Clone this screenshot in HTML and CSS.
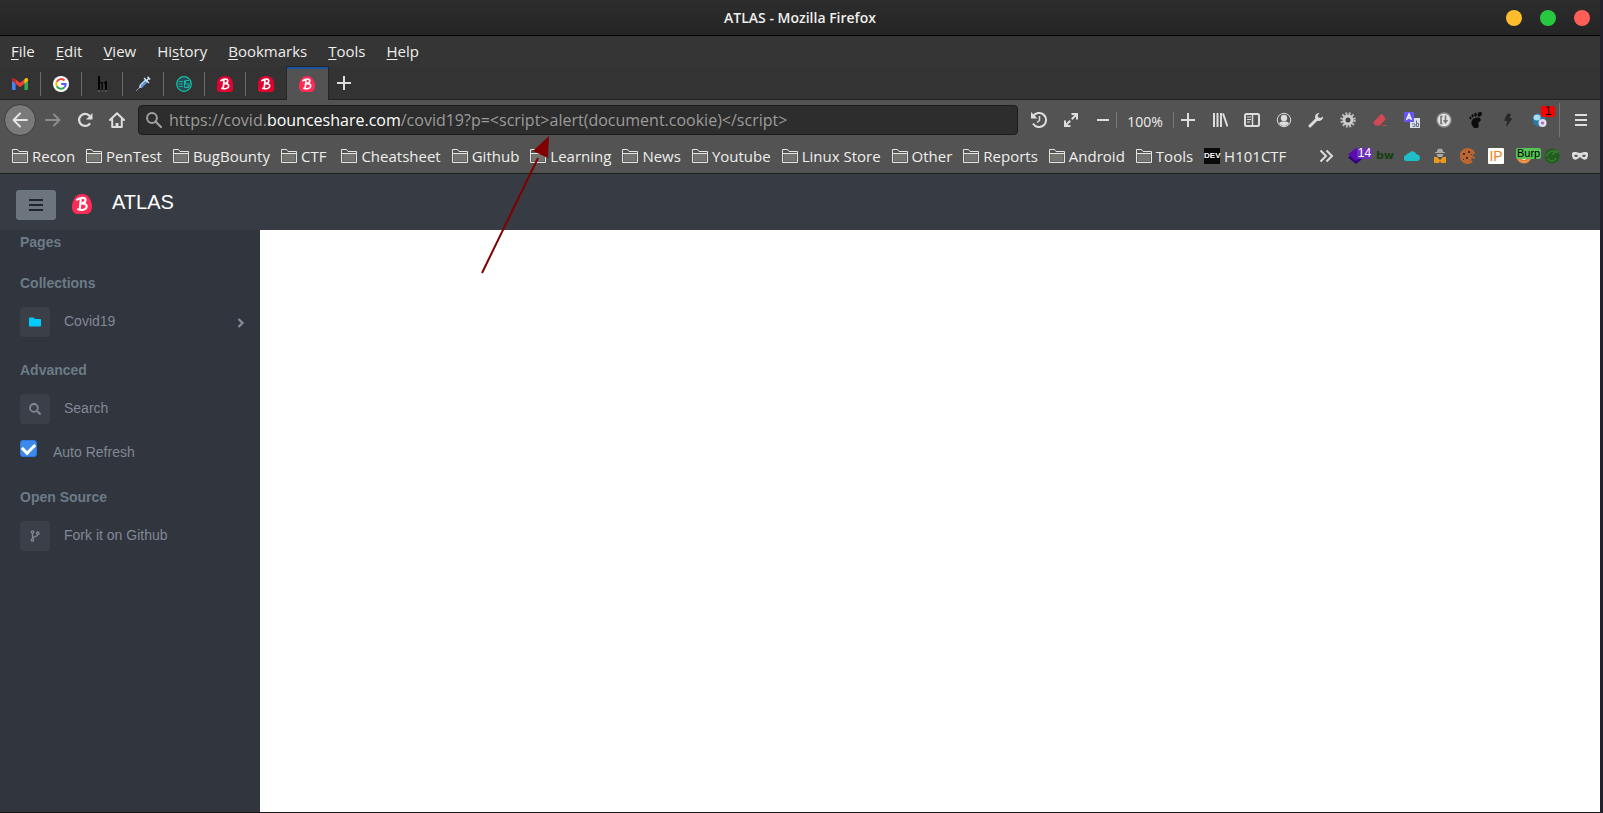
FILE: index.html
```html
<!DOCTYPE html>
<html lang="en">
<head>
<meta charset="utf-8">
<title>ATLAS</title>
<link rel="stylesheet" href="styles.css">
</head>
<body>
<svg class="defs" aria-hidden="true">
  <symbol id="folder" viewBox="0 0 16 16"><path d="M.5 14.500V1.500h5l1.500 2h8.500v11z" fill="none" stroke="#e4e4e2"/><path d="M1.500 6h13v7.500h-13z" fill="#73736f"/><path d="M.5 5.500h15" stroke="#e4e4e2"/></symbol>
  <symbol id="logo" viewBox="0 0 16 16"><path d="M8 0C3 0 0 5 0 10.500 0 14 2 16 5 16h6c3 0 5-2 5-5.500C16 5 13 0 8 0z" fill="currentColor"/><path d="M4 4.600C6 3 10.500 2.200 10.800 4.500 11 6.500 8.500 7.400 6.800 7.600 9.500 7.300 12 8 11.700 10.300 11.400 12.600 7.500 13.300 4.800 12.300M7 4.200 6.200 12.300" fill="none" stroke="#fff" stroke-width="1.700" stroke-linecap="round" stroke-linejoin="round"/></symbol>
  <symbol id="logo-square" viewBox="0 0 16 16"><path d="M8 0C3 0 0 3.500 0 8v5.500C0 15 1 16 2.500 16h11c1.500 0 2.500-1 2.500-2.500V8c0-4.500-3-8-8-8z" fill="currentColor"/><path d="M4 4.600C6 3 10.500 2.200 10.800 4.500 11 6.500 8.500 7.400 6.800 7.600 9.500 7.300 12 8 11.700 10.300 11.400 12.600 7.500 13.300 4.800 12.300M7 4.200 6.200 12.300" fill="none" stroke="#fff" stroke-width="1.700" stroke-linecap="round" stroke-linejoin="round"/></symbol>
</svg>
<div class="window">
  <header class="titlebar">
    <h1 class="window-title">ATLAS - Mozilla Firefox</h1>
    <div class="window-buttons">
      <button class="dot dot-yellow" aria-label="Minimize"></button>
      <button class="dot dot-green" aria-label="Maximize"></button>
      <button class="dot dot-red" aria-label="Close"></button>
    </div>
  </header>
  <nav class="menubar" aria-label="Menu">
    <button><u>F</u>ile</button><button><u>E</u>dit</button><button><u>V</u>iew</button><button>Hi<u>s</u>tory</button><button><u>B</u>ookmarks</button><button><u>T</u>ools</button><button><u>H</u>elp</button>
  </nav>
  <div class="tabs" role="tablist">
    <button class="tab" role="tab" aria-label="Gmail"><svg viewBox="0 0 16 16"><path d="M0 3.500h3.600V14H1.200A1.200 1.200 0 0 1 0 12.800z" fill="#4285f4"/><path d="M12.400 3.500H16v9.300a1.200 1.200 0 0 1-1.200 1.200h-2.400z" fill="#34a853"/><path d="M3.600 3.300 8 6.700l4.400-3.400v4.500L8 11.200 3.600 7.800z" fill="#ea4335"/><path d="M0 4.800V3.700c0-2 2-2.200 3.600-.4v4.500z" fill="#c5221f"/><path d="M16 4.800V3.700c0-2-2-2.200-3.600-.4v4.500z" fill="#fbbc04"/></svg></button>
    <button class="tab" role="tab" aria-label="Google"><svg viewBox="0 0 16 16"><circle cx="8" cy="8" r="8" fill="#fff"/><g fill="none" stroke-width="2"><path d="M11.500 4.500A4.800 4.800 0 0 0 3.800 5.700" stroke="#ea4335"/><path d="M3.800 5.700a4.800 4.800 0 0 0 0 4.600" stroke="#fbbc05"/><path d="M3.800 10.300a4.800 4.800 0 0 0 7.500 1.200" stroke="#34a853"/><path d="M11.300 11.500A4.800 4.800 0 0 0 12.700 8H8.200" stroke="#5b5cf6"/></g></svg></button>
    <button class="tab" role="tab" aria-label="HackerOne"><svg viewBox="0 0 16 16"><path d="M4 0h2v14H4zM10 6.500l2-1.500h1v9h-2V7.500h-1zM6 6h3v1H6zM7.500 7h1.200v7H7.500z" fill="#000"/><path d="M4 15h2M8 15h1M11 15h2" stroke="#777"/></svg></button>
    <button class="tab" role="tab" aria-label="Syringe"><svg viewBox="0 0 16 16"><path d="m1 15 4-4" stroke="#7892bb"/><path d="m4.500 9 6-6 2.500 2.500-6 6-3 .800z" fill="#b9d5f5"/><path d="m5.500 10 5-5 1.500 1.500-5 5z" fill="#5c8cd6"/><path d="m9 2 5 5M12 4.200l2-2.200M12.500.800l2.700 2.700" stroke="#dce9fa" stroke-width="1.300"/></svg></button>
    <button class="tab" role="tab" aria-label="Dashboard"><svg viewBox="0 0 16 16"><circle cx="8" cy="8" r="7.300" fill="#25485a" stroke="#18c6a0" stroke-width="1.200"/><path d="M3 5.500h4M2.500 8H7M3 10.500h4M8.500 4.500v7H13V9M13 4.500H9.500V8H14M11 10h2" fill="none" stroke="#18b99a"/></svg></button>
    <button class="tab" role="tab" aria-label="Bounceshare"><svg class="crimson"><use href="#logo-square"/></svg></button>
    <button class="tab tab-last" role="tab" aria-label="Bounceshare"><svg class="crimson"><use href="#logo-square"/></svg></button>
    <button class="tab tab-active" role="tab" aria-selected="true" aria-label="ATLAS"><svg class="pink"><use href="#logo"/></svg></button>
    <button class="new-tab" aria-label="New tab"><svg viewBox="0 0 16 16"><path d="M8 1v14M1 8h14" stroke="#ddd" stroke-width="2"/></svg></button>
  </div>
  <div class="navbar">
    <button class="tool back" aria-label="Back"><svg viewBox="0 0 16 16"><path d="M15 8H1.500M8 1.500 1.500 8 8 14.500" fill="none" stroke="#e4e4e2" stroke-width="2" stroke-linecap="round" stroke-linejoin="round"/></svg></button>
    <button class="tool" aria-label="Forward"><svg viewBox="0 0 16 16"><path d="M1 8h13.500M9 2.500 14.500 8 9 13.500" fill="none" stroke="#8c8c8a" stroke-width="2" stroke-linecap="round" stroke-linejoin="round"/></svg></button>
    <button class="tool" aria-label="Reload"><svg viewBox="0 0 16 16"><path d="M12 3.400A6 6 0 1 0 12.500 12" fill="none" stroke="#ddd" stroke-width="2.300" stroke-linecap="round"/><path d="M15.500 1v6.500H9z" fill="#ddd"/></svg></button>
    <button class="tool" aria-label="Home"><svg viewBox="0 0 16 16"><path d="M1 8 8 1.200 15 8M3.200 7.500V15h9.600V7.500" fill="none" stroke="#ddd" stroke-width="2" stroke-linejoin="round" stroke-linecap="round"/><path d="M6.500 15v-4h3v4" fill="#ddd"/></svg></button>
    <div class="urlbar">
      <svg viewBox="0 0 16 16"><circle cx="6" cy="6" r="4.900" fill="none" stroke="#a0a0a0" stroke-width="2"/><path d="m9.500 9.500 5.500 5.500" stroke="#a0a0a0" stroke-width="2.200" stroke-linecap="round"/></svg>
      <div class="url" role="textbox" aria-label="Address" contenteditable="true" spellcheck="false">https://covid.<span class="host">bounceshare.com</span>/covid19?p=&lt;script&gt;alert(document.cookie)&lt;/script&gt;</div>
    </div>
    <button class="tool" aria-label="History"><svg viewBox="0 0 16 16"><path d="M2 4.500A7 7 0 1 1 2 11.500" fill="none" stroke="#ddd" stroke-width="2"/><path d="M0 0v6.500h6.500z" fill="#ddd"/><path d="M8.500 4v4.500L6 10.500" fill="none" stroke="#ddd" stroke-width="1.500"/></svg></button>
    <button class="tool" aria-label="Full screen"><svg viewBox="0 0 16 16"><path d="m3 13L13 3" stroke="#ddd" stroke-width="2" stroke-dasharray="6 2.100"/><path d="M8.500 2H14v5.500M2 8.500V14h5.500" fill="none" stroke="#ddd" stroke-width="2"/><path d="M10 1h5v5zM1 10v5h5z" fill="#ddd"/></svg></button>
    <button class="tool" aria-label="Zoom out"><svg viewBox="0 0 16 16"><path d="M2 8h12" stroke="#ddd" stroke-width="2"/></svg></button>
    <button class="zoom-level">100%</button>
    <button class="tool" aria-label="Zoom in"><svg viewBox="0 0 16 16"><path d="M8 1v14M1 8h14" stroke="#ddd" stroke-width="2"/></svg></button>
    <button class="tool" aria-label="Library"><svg viewBox="0 0 16 16"><path d="M2 1v14M5.500 1v14M9 1v14M11 1.500l4.500 13" stroke="#ddd" stroke-width="2"/></svg></button>
    <button class="tool" aria-label="Sidebars"><svg viewBox="0 0 16 16"><rect x="1" y="2" width="14" height="12" rx="1.500" fill="none" stroke="#ddd" stroke-width="2"/><path d="M8.500 2v12" stroke="#ddd" stroke-width="1.500"/><path d="M3 5h4M3 7.500h4M3 10h3" stroke="#ddd"/></svg></button>
    <button class="tool" aria-label="Account"><svg viewBox="0 0 16 16"><circle cx="8" cy="8" r="6.700" fill="none" stroke="#ddd" stroke-width="1"/><circle cx="8" cy="6" r="3.200" fill="#ddd"/><path d="M3 11c1-1.500 3-1.500 5-1.500s4 0 5 1.500c-1 2-3 3-5 3s-4-1-5-3z" fill="#ddd"/></svg></button>
    <button class="tool" aria-label="Developer"><svg viewBox="0 0 16 16"><path d="m2 14 7.500-7.500" stroke="#ddd" stroke-width="3" stroke-linecap="round"/><path d="M11.500 1a4 4 0 1 0 3.500 3.500L12.500 6 10 5.500 9.700 3.200z" fill="#ddd"/></svg></button>
    <button class="tool" aria-label="Settings"><svg viewBox="0 0 16 16"><circle cx="8" cy="8" r="6.500" fill="none" stroke="#bbb" stroke-width="2.500" stroke-dasharray="1.900 1.500"/><circle cx="8" cy="8" r="4" fill="#555" stroke="#ccc" stroke-width="3"/><circle cx="8" cy="8" r="2.200" fill="#444"/></svg></button>
    <button class="tool" aria-label="Eraser"><svg viewBox="0 0 16 16"><path d="m1.500 10 7-7.500c.700-.700 1.300-.700 2 0L13.300 6c.500.600.500 1 0 1.600L8 13.500H3.500l-2-2c-.500-.500-.500-1 0-1.500z" fill="#d04a55"/><path d="M10.500 13.500h4" stroke="#d04a55"/></svg></button>
    <button class="tool" aria-label="Translate"><svg viewBox="0 0 16 16"><path d="M6 6h10v10H6z" fill="#dbe0e8"/><path d="M0 0h10v10H0z" fill="#6457f5"/><path d="M2.500 8 5 2l2.500 6M3.500 6h3" fill="none" stroke="#fff" stroke-width="1.300"/><path d="M8 12h3v2.500H8.500M12.500 8.500v6h2v-3h-2" fill="none" stroke="#66738a"/></svg></button>
    <button class="tool" aria-label="Downloads"><svg viewBox="0 0 16 16"><circle cx="8" cy="8" r="7.700" fill="#8c8c8c"/><circle cx="8" cy="8" r="6.300" fill="#e2e2e2"/><path d="M6.500 4.500H5v7h1.500M9.500 3.500v5" fill="none" stroke="#777" stroke-width="1.600"/><path d="M6.800 8h5.400L9.500 12z" fill="#777"/></svg></button>
    <button class="tool" aria-label="GNOME extensions"><svg viewBox="0 0 16 16"><path d="M12 0c2.500 0 2 4-.500 4.500C9 5 9.500 0 12 0zM7.500 1c1.500 0 1.200 3.500 0 3.500S6 1 7.500 1zM4.500 2.500c1 0 1.200 2.500.300 2.700-1 .200-1.500-2.700-.300-2.700zM2.300 5c.900 0 1.300 2 .400 2.100-.900.200-1.500-2.100-.400-2.100zM8 6c3.500-1 5.500 1 4 3-1 1.200-2.500 1-2 2.500s1 4-1.500 4.500C5 16.500 3 12 4 9c.700-2 2-2.500 4-3z" fill="#0c0c0c" stroke="#0c0c0c" stroke-width=".600"/></svg></button>
    <button class="tool" aria-label="Shortcuts"><svg viewBox="0 0 16 16"><path d="M7.500 2h3L9 6.500h3L6.500 14l1-5.500H4.500z" fill="#262626" stroke="#262626" stroke-width=".600"/></svg></button>
    <button class="tool badge-host" aria-label="Web monitor, 1"><svg viewBox="0 0 16 16"><circle cx="7" cy="8" r="6.500" fill="#2878a8"/><ellipse cx="5" cy="5.500" rx="3.500" ry="3" fill="#a8dcf4"/><circle cx="10.500" cy="11" r="4" fill="#e4deee"/><circle cx="10.500" cy="11" r="1.600" fill="#a070b8"/></svg><span class="badge badge-red">1</span></button>
    <button class="app-menu" aria-label="Open menu"><svg viewBox="0 0 16 16"><path d="M2 3h12M2 8h12M2 13h12" stroke="#ddd" stroke-width="2"/></svg></button>
  </div>
  <nav class="bookmarks" aria-label="Bookmarks">
    <a href="#"><svg><use href="#folder"/></svg>Recon</a>
    <a href="#"><svg><use href="#folder"/></svg>PenTest</a>
    <a href="#"><svg><use href="#folder"/></svg>BugBounty</a>
    <a href="#" class="wide"><svg><use href="#folder"/></svg>CTF</a>
    <a href="#"><svg><use href="#folder"/></svg>Cheatsheet</a>
    <a href="#"><svg><use href="#folder"/></svg>Github</a>
    <a href="#"><svg><use href="#folder"/></svg>Learning</a>
    <a href="#"><svg><use href="#folder"/></svg>News</a>
    <a href="#"><svg><use href="#folder"/></svg>Youtube</a>
    <a href="#"><svg><use href="#folder"/></svg>Linux Store</a>
    <a href="#"><svg><use href="#folder"/></svg>Other</a>
    <a href="#"><svg><use href="#folder"/></svg>Reports</a>
    <a href="#"><svg><use href="#folder"/></svg>Android</a>
    <a href="#"><svg><use href="#folder"/></svg>Tools</a>
    <a href="#"><span class="dev">DEV</span>H101CTF</a>
    <div class="extensions">
      <button class="more" aria-label="More bookmarks"><svg viewBox="0 0 16 16"><path d="m2.500 2.500 5.500 5.500-5.500 5.500M8.500 2.500 14 8l-5.500 5.500" fill="none" stroke="#ddd" stroke-width="2"/></svg></button>
      <button class="badge-host" aria-label="Layers, 14"><svg viewBox="0 0 16 16"><path d="m8 4 8 5.500L8 16 0 9.500z" fill="#31007c"/><path d="m8 0 8 6.500L8 13 0 6.500z" fill="#5a0bb0"/></svg><span class="badge badge-purple">14</span></button>
      <button class="bw">bw</button>
      <button aria-label="Cloud"><svg viewBox="0 0 16 16"><path d="M3 13a3 3 0 0 1-.500-6C3 5 4.500 5 5.500 5c1-2.500 5.500-2.500 6.500 1 5 .500 5 6.500 1.500 7z" fill="#1fbfca"/></svg></button>
      <button aria-label="User agent"><svg viewBox="0 0 16 16"><path d="M5 4c0-3 1-4 3-3 2-1 3 0 3 3h2v1H3V4zM4.500 6h7L10 9H6z" fill="#aaa9a3"/><path d="M2 9h3l3 3 3-3h3v6H9l-1-2-1 2H2z" fill="#e99b20"/></svg></button>
      <button aria-label="Cookies"><svg viewBox="0 0 16 16"><path d="M8 0a8 8 0 1 0 5 14l-2-2 1-2 3 1v-2l-3-1 2-2 1-1A8 8 0 0 0 8 0z" fill="#bb6531"/><path d="M3 5h2v2H3zM8 3h2v2H8zM6 9h2v2H6zM3 11h1v1H3zM11 6h1v1h-1z" fill="#4c2618"/></svg></button>
      <button class="ip">IP</button>
      <button class="badge-host" aria-label="Proxy, Burp"><svg viewBox="0 0 16 16"><circle cx="8" cy="8" r="7.500" fill="#e99147"/><circle cx="8" cy="9" r="4.500" fill="#eee"/><path d="M4 10.500c2 3 6 3 8 0" fill="none" stroke="#e47b27" stroke-width="1.500"/></svg><span class="badge badge-green">Burp</span></button>
      <button aria-label="Security"><svg viewBox="0 0 16 16"><circle cx="8" cy="8" r="7.500" fill="#245c20"/><path d="M2 8c3-5 7-6 12-4-4 0-5 1-5 3M4 11c3 3 6 3 8-1" fill="none" stroke="#37802f" stroke-width="1.500"/></svg></button>
      <button aria-label="Private mask"><svg viewBox="0 0 16 16"><path fill-rule="evenodd" d="M0 6c0-3 4-2 8-1 4-1 8-2 8 1 0 8-5 6-8 3-3 3-8 5-8-3zm2 1.500c1.500 2 3 2 4 .500-1-1.500-3-1.500-4-.500zm8 .500c1 1.500 2.500 1.500 4-.500-1-1-3-1-4 .500z" fill="#ddd"/></svg></button>
    </div>
  </nav>
  <div class="page">
    <header class="page-header">
      <button class="sidebar-toggle" aria-label="Toggle sidebar"><svg viewBox="0 0 14 14"><path d="M0 2h14M0 7h14M0 12h14" stroke="#212529" stroke-width="2"/></svg></button>
      <svg class="brand-logo pink"><use href="#logo"/></svg>
      <h2 class="brand">ATLAS</h2>
    </header>
    <div class="page-body">
      <aside class="sidebar">
        <h3>Pages</h3>
        <h3>Collections</h3>
        <a class="item" href="#"><span class="item-icon"><svg viewBox="0 0 12 12"><path d="M0 2.500c0-.800.400-1 1-1h3.500L6 3h5c.700 0 1 .300 1 1v5.500c0 .700-.300 1-1 1H1c-.700 0-1-.300-1-1z" fill="#0cf"/></svg></span><span class="item-label">Covid19</span><svg class="chevron" viewBox="0 0 8 10"><path d="m1.500 1 4 4-4 4" fill="none" stroke="#818896" stroke-width="2.400"/></svg></a>
        <h3>Advanced</h3>
        <a class="item" href="#"><span class="item-icon"><svg viewBox="0 0 12 12"><circle cx="4.900" cy="4.900" r="3.900" fill="none" stroke="#818896" stroke-width="1.800"/><path d="m8 8 3.500 3.500" stroke="#818896" stroke-width="2"/></svg></span><span class="item-label">Search</span></a>
        <label class="check"><input type="checkbox" checked><span>Auto Refresh</span></label>
        <h3>Open Source</h3>
        <a class="item" href="#"><span class="item-icon"><svg viewBox="0 0 12 12"><g fill="none" stroke="#818896" stroke-width="1.300"><circle cx="3.500" cy="2" r="1.200"/><circle cx="3.500" cy="10" r="1.200"/><circle cx="8.800" cy="3.200" r="1.200"/><path d="M3.500 3.200v5.600M8.800 4.400C8.800 7 4 6 3.500 8.500"/></g></svg></span><span class="item-label">Fork it on Github</span></a>
      </aside>
      <main class="content"></main>
    </div>
  </div>
</div>
<svg class="arrow" viewBox="0 0 70 140" aria-hidden="true"><path d="M2 137 58 22" stroke="#800000" stroke-width="2"/><path d="m69 0-1 22-15-7z" fill="#800000"/></svg>
</body>
</html>
```
FILE: styles.css
```css
* { box-sizing: border-box; }
html, body { height: 100%; }
body { margin: 0; background: #22222a; font-family: "Open Sans", "Noto Sans", sans-serif; font-size: 15px; color: #eeeeec; overflow: hidden; }
button { border: 0; padding: 0; margin: 0; background: none; color: inherit; font: inherit; }
a { color: inherit; text-decoration: none; }
h1, h2, h3 { margin: 0; }
svg { display: block; flex: none; width: 16px; height: 16px; }
.defs { display: none; }
.pink { color: #ff2a55; }
.crimson { color: #e0032f; }

.window { display: flex; flex-direction: column; min-height: 100vh; margin-right: 3px; border-bottom: 1px solid #151515; }

.titlebar { display: grid; grid-template-columns: 1fr auto 1fr; align-items: center; height: 36px; background: linear-gradient(#2d2d2d, #242424); border-bottom: 1px solid #000; }
.window-title { grid-column: 2; font-size: 14px; font-weight: 600; line-height: 20px; }
.window-buttons { display: flex; gap: 18px; justify-content: flex-end; padding-right: 10px; }
.dot { width: 16px; height: 16px; border-radius: 50%; }
.dot-yellow { background: #ffbd2e; }
.dot-green { background: #28c941; }
.dot-red { background: #ff5f57; }

.menubar { display: flex; height: 31px; padding-left: 1px; background: #353535; }
.menubar button { padding: 0 11px 0 10px; line-height: 31px; }
.menubar u { text-underline-offset: 2px; }

.tabs { display: flex; height: 33px; background: #333; border-bottom: 1px solid #222; }
.tab { display: flex; align-items: center; justify-content: center; width: 41px; padding: 1px 2px 0 0; position: relative; }
.tab::after { content: ""; position: absolute; right: 0; top: 5px; bottom: 3px; width: 1px; background: #6b6b6b; }
.tab-last::after, .tab-active::after { display: none; }
.tab-active { padding: 0 2px 2px 0; background: #535353; border-top: 2px solid #15539e; margin-bottom: -1px; outline: 1px solid #262626; clip-path: inset(-1px -1px 0 -1px); }
.new-tab { padding: 0 8px; }

.navbar { display: flex; align-items: center; height: 39px; padding-left: 4px; background: #535353; }
.tool { display: flex; align-items: center; justify-content: center; flex: none; width: 32px; height: 32px; }
.back { margin-right: 1px; border-radius: 50%; background: #7a7a7a; border: 1px solid #3c3c3c; }
.urlbar { display: flex; align-items: center; flex: 1; gap: 7px; height: 30px; margin: 0 5px; padding: 0 7px; background: #2d2d2d; border: 1px solid #1c1c1c; border-radius: 4px; overflow: hidden; }
.url { flex: 1; min-width: 0; white-space: nowrap; font-size: 16px; line-height: 26px; color: #9b9b99; }
.host { color: #fff; }
.zoom-level { width: 58px; height: 16px; margin: 0 -2px 0 -3px; border: solid #7b7b7b; border-width: 0 1px; font-size: 14px; line-height: 20px; }
.badge-host { position: relative; }
.badge { position: absolute; color: #000; font: 12px/11px "Liberation Sans", sans-serif; border-radius: 2px; }
.badge-red { left: 17px; top: 2px; width: 14px; background: #f00; }
.app-menu { display: flex; align-items: center; justify-content: center; width: 41px; height: 34px; margin-left: 3px; padding-left: 2px; border-left: 1px solid #757575; }

.bookmarks { display: flex; align-items: center; gap: 11px; height: 35px; padding: 0 12px; background: #535353; border-bottom: 1px solid #1d1d1d; white-space: nowrap; }
.bookmarks a { display: flex; align-items: center; gap: 4px; line-height: 20px; }
.wide { margin-right: 4px; }
.dev { width: 16px; height: 16px; background: #0a0a0a; color: #fff; font: bold 8px/16px "Liberation Sans", sans-serif; text-align: center; }
.extensions { display: flex; align-items: center; gap: 12px; margin-left: auto; }
.extensions button { width: 16px; height: 16px; }
.extensions .more { margin-right: 2px; }
.badge-purple { left: 9px; top: 0; width: 15px; background: #6c2fb8; color: #fff; }
.badge-green { left: 0; top: 0; padding: 0 1px; background: #55c455; font-size: 11px; }
.extensions .bw { color: #144014; font: bold 11px/16px "DejaVu Sans", sans-serif; }
.extensions .ip { background: #fff; color: #ef8118; font: 14px/16px "Liberation Sans", sans-serif; border-radius: 1px; }

.page { display: flex; flex-direction: column; flex: 1; font-family: "Liberation Sans", Arial, sans-serif; font-size: 14px; }
.page-header { display: flex; align-items: center; height: 56px; padding: 6px 16px 0; background: #373b43; }
.sidebar-toggle { display: flex; align-items: center; justify-content: center; width: 40px; height: 30px; background: #6c757d; border-radius: 3px; }
.sidebar-toggle svg { width: 14px; height: 14px; }
.brand-logo { width: 20px; height: 20px; margin: 0 20px 2px 16px; }
.brand { padding-bottom: 6px; font-size: 20px; line-height: 24px; font-weight: 400; color: #fff; }
.page-body { display: flex; flex: 1; }
.sidebar { width: 260px; padding: 4px 15px 0 20px; background: #31353d; color: #818896; }
.sidebar h3 { margin-bottom: 24px; font-size: 14px; line-height: 17px; color: #6c7b88; }
.item { display: flex; align-items: center; height: 30px; margin: -9px 0 25px; }
.item-icon { display: flex; align-items: center; justify-content: center; width: 30px; height: 30px; margin-right: 14px; background: #3a3f48; border-radius: 4px; }
.item-icon svg { width: 12px; height: 12px; }
.item-label { flex: 1; padding-bottom: 2px; line-height: 20px; }
.chevron { width: 8px; height: 10px; margin-top: 2px; }
.check { display: flex; gap: 16px; margin: -9px 0 25px; line-height: 24px; }
.check input { appearance: none; width: 17px; height: 17px; margin: 0; border: 1px solid #2e79e0; border-radius: 3px; background: #3d8aea; display: grid; place-items: center; }
.check input::after { content: ""; width: 10px; height: 6px; border: solid #fff; border-width: 0 0 3px 3px; transform: translateY(-1px) rotate(-45deg); }
.content { flex: 1; background: #fff; }
.arrow { position: absolute; left: 480px; top: 136px; width: 70px; height: 140px; pointer-events: none; }
```
